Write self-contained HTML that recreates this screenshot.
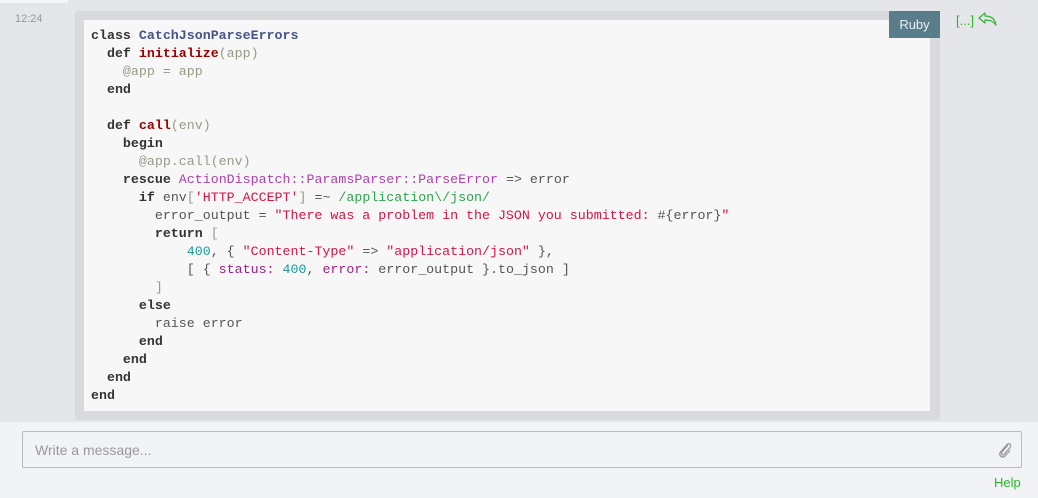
<!DOCTYPE html>
<html><head><meta charset="utf-8"><style>
*{margin:0;padding:0;box-sizing:border-box}
body{width:1038px;height:498px;background:#e5e6ea;position:relative;overflow:hidden;font-family:"Liberation Sans",sans-serif}
.top{position:absolute;left:0;top:0;width:68px;height:3px;background:#f4f5f7}
.time{position:absolute;left:15px;top:13px;font-size:11px;color:#999}
.outer{position:absolute;left:75px;top:11px;width:865px;height:409px;background:#d9dadd;border-radius:3px}
pre{position:absolute;left:84px;top:20px;width:846px;height:391px;background:#f7f7f7;font-family:"Liberation Mono",monospace;font-size:13.3px;line-height:18px;padding:7px 0 0 7px;color:#555}
.ruby{position:absolute;left:889px;top:11px;width:51px;height:27px;background:#5a7d8c;color:#e8eef0;font-size:13px;text-align:center;line-height:27px}
.k{font-weight:bold;color:#333}.f{font-weight:bold;color:#990000}.c{font-weight:bold;color:#445588}
.g{color:#998}.s{color:#dd1144}.m{color:#b03fb0}.r{color:#2aa84a}.n{color:#1a9a9a}.y{color:#a02080}
.links{position:absolute;left:956px;top:12px;color:#2db52d;font-size:13px}
.bottom{position:absolute;left:0;top:422px;width:1038px;height:76px;background:#f2f3f6}
.input{position:absolute;left:22px;top:431px;width:1000px;height:37px;border:1px solid #bbb;background:#f2f3f6;border-radius:2px}
.ph{position:absolute;left:12px;top:10px;font-size:14px;color:#999}
.help{position:absolute;left:994px;top:475px;font-size:13px;color:#2db52d}
</style></head><body>
<div class="top"></div>
<div class="time">12:24</div>
<div class="outer"></div>
<pre><span class="k">class</span> <span class="c">CatchJsonParseErrors</span>
  <span class="k">def</span> <span class="f">initialize</span><span class="g">(app)</span>
    <span class="g">@app = app</span>
  <span class="k">end</span>

  <span class="k">def</span> <span class="f">call</span><span class="g">(env)</span>
    <span class="k">begin</span>
      <span class="g">@app.call(env)</span>
    <span class="k">rescue</span> <span class="m">ActionDispatch::ParamsParser::ParseError</span> =&gt; error
      <span class="k">if</span> env<span class="g">[</span><span class="s">'HTTP_ACCEPT'</span><span class="g">]</span> =~ <span class="r">/application\/json/</span>
        error_output = <span class="s">"There was a problem in the JSON you submitted: </span>#{error}<span class="s">"</span>
        <span class="k">return</span> <span class="g">[</span>
            <span class="n">400</span>, { <span class="s">"Content-Type"</span> =&gt; <span class="s">"application/json"</span> },
            [ { <span class="y">status:</span> <span class="n">400</span>, <span class="y">error:</span> error_output }.to_json ]
        <span class="g">]</span>
      <span class="k">else</span>
        raise error
      <span class="k">end</span>
    <span class="k">end</span>
  <span class="k">end</span>
<span class="k">end</span></pre>
<div class="ruby">Ruby</div>
<div class="links">[...] <svg width="20" height="14" viewBox="0 0 20 14" style="vertical-align:-1px"><path d="M7 1 L1 6 L7 11 L7 8 C12 8 15 9 18 13 C17 7 13 4 7 4 Z" fill="none" stroke="#2db52d" stroke-width="1.2" stroke-linejoin="round"/></svg></div>
<div class="bottom"></div>
<div class="input"><span class="ph">Write a message...</span>
<svg style="position:absolute;right:8px;top:9px" width="16" height="18" viewBox="0 0 16 18"><path d="M11 4 L5 11 C3.5 13 5.5 15 7 13.5 L13 6.5 C15 4 12 1 10 3.5 L3.5 11 C1 14 5 18 8 15 L13 9.5" fill="none" stroke="#999" stroke-width="1.3"/></svg></div>
<div class="help">Help</div>
</body></html>
